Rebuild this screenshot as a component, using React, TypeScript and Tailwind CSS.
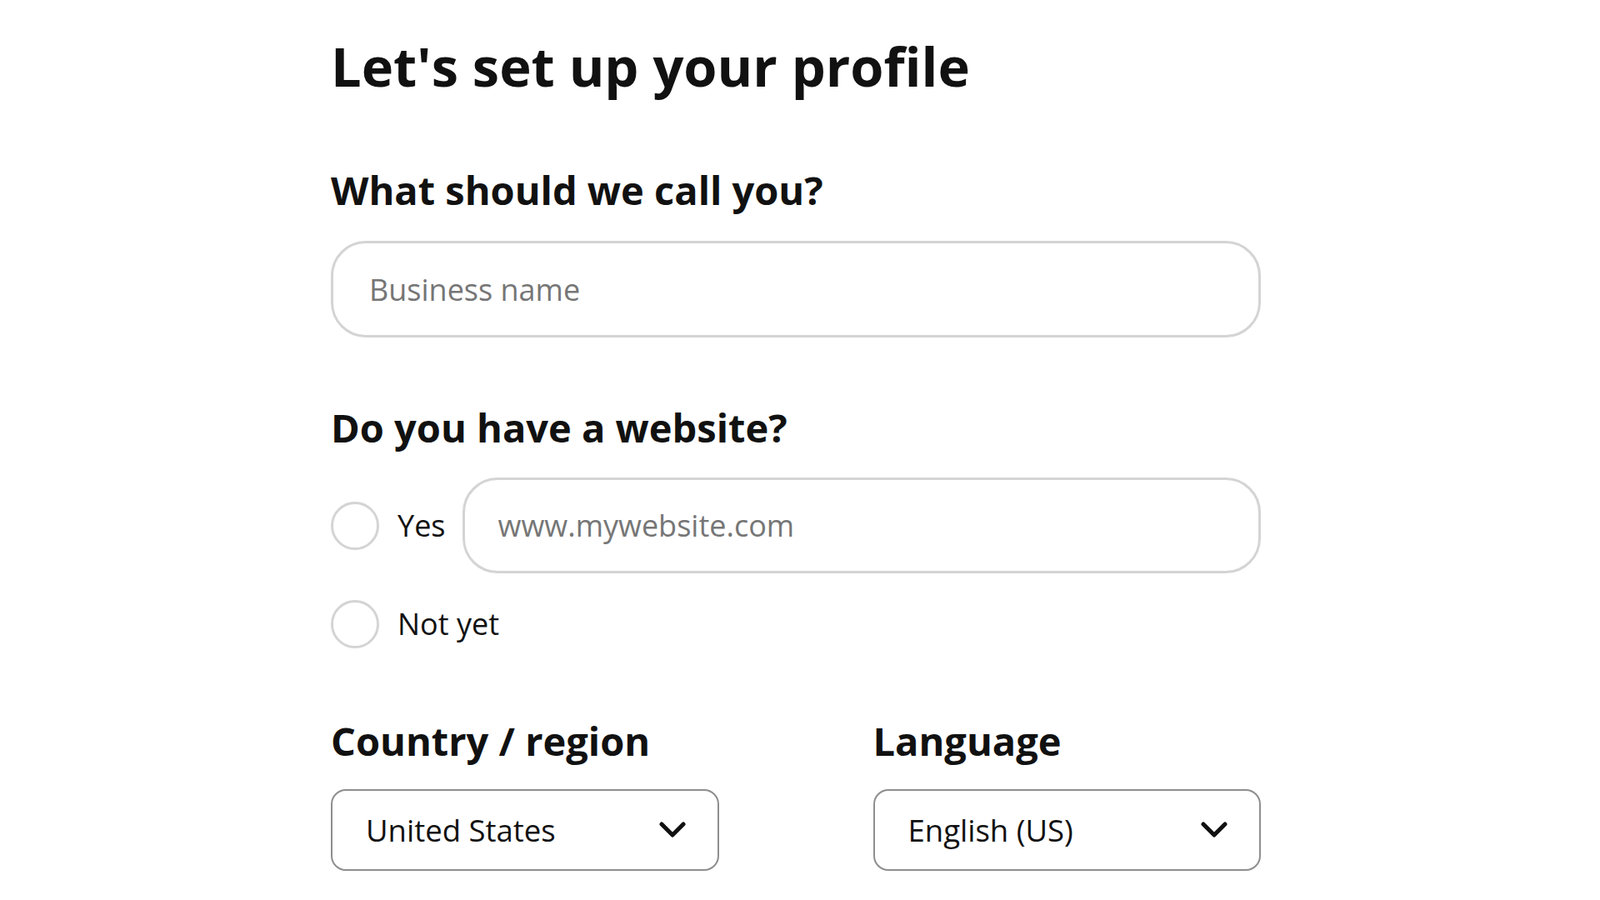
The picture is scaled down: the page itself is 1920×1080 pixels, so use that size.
import React from "react";

function Radio() {
  return (
    <span className="block h-[58px] w-[58px] shrink-0 rounded-full border-[3px] border-[#d4d4d4] bg-white" />
  );
}

function Chevron() {
  return (
    <svg width="32" height="20" viewBox="0 0 32 20" fill="none" aria-hidden="true">
      <path d="M3 3 L16 16 L29 3" stroke="#111111" strokeWidth="5" strokeLinecap="round" strokeLinejoin="round" />
    </svg>
  );
}

function SelectBox({ value }: { value: string }) {
  return (
    <div className="mt-[30px] flex h-[98px] w-full items-center justify-between rounded-[18px] border-2 border-[#8e8e8e] bg-white pl-[40px] pr-[38px] text-[36.5px] text-[#111111]">
      <span>{value}</span>
      <Chevron />
    </div>
  );
}

export default function App() {
  return (
    <div className="min-h-screen bg-white font-['Open_Sans',sans-serif] text-[#111111]">
      <div className="ml-[397px] w-[1116px] pt-[40px]">
        <h1 className="text-[65px] font-bold leading-[78px]">Let's set up your profile</h1>

        <h2 className="mt-[82px] text-[47px] font-bold leading-[56px]">What should we call you?</h2>
        <input
          className="mt-[33px] block h-[116px] w-full rounded-[42px] border-[3px] border-[#d4d4d4] bg-white px-[43px] text-[36px] text-[#111111] outline-none placeholder:text-[#767676]"
          placeholder="Business name"
        />

        <h2 className="mt-[80px] text-[47px] font-bold leading-[56px]">Do you have a website?</h2>
        <div className="mt-[32px] flex items-center">
          <Radio />
          <span className="ml-[22px] text-[36px] leading-[48px]">Yes</span>
          <input
            className="ml-[20px] block h-[115px] flex-1 rounded-[42px] border-[3px] border-[#d4d4d4] bg-white px-[40px] text-[36px] text-[#111111] outline-none placeholder:text-[#767676]"
            placeholder="www.mywebsite.com"
          />
        </div>
        <div className="mt-[32px] flex items-center">
          <Radio />
          <span className="ml-[22px] text-[36px] leading-[48px]">Not yet</span>
        </div>

        <div className="mt-[83px] grid grid-cols-2 gap-x-[185px]">
          <div>
            <h2 className="text-[47px] font-bold leading-[56px]">Country / region</h2>
            <SelectBox value="United States" />
          </div>
          <div>
            <h2 className="text-[47px] font-bold leading-[56px]">Language</h2>
            <SelectBox value="English (US)" />
          </div>
        </div>
      </div>
    </div>
  );
}
